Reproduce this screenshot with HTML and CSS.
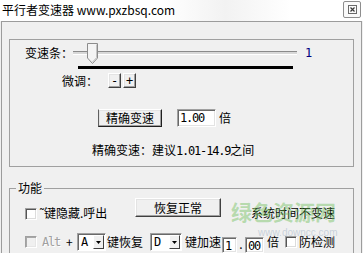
FILE: index.html
```html
<!DOCTYPE html>
<html lang="zh-CN">
<head>
    <meta charset="UTF-8">
    <title>平行者变速器</title>
    <link rel="stylesheet" href="styles.css">
</head>
<body>

    <div class="titlebar">
        <span class="title">平行者变速器 www.pxzbsq.com</span>
        <span class="close">
            <svg width="9" height="9" viewBox="0 0 9 9">
                <rect x="0.5" y="0.5" width="8" height="8" fill="none" stroke="#6a6a6a"/>
                <path d="M2.5 2.5L6.5 6.5M6.5 2.5L2.5 6.5" stroke="#3a3a3a" stroke-width="1.2"/>
            </svg>
        </span>
    </div>

    <div class="window">
        <div class="group speed">
            <div class="slider-row">
                <span class="label-slider">变速条：</span>
                <div class="track">
                    <div class="groove"></div>
                    <svg class="thumb" width="11" height="21" viewBox="0 0 11 21">
                        <polygon points="0.5,0.5 10.5,0.5 10.5,15 5.5,20.5 0.5,15" fill="#f4f4f4" stroke="#8c8c8c"/>
                        <polyline points="9.5,1.5 9.5,14.6 5.5,19" fill="none" stroke="#c4c4c4"/>
                    </svg>
                </div>
                <span class="slider-value">1</span>
            </div>
            <div class="speed-bar"></div>
            <div class="fine-row">
                <span class="label-fine">微调：</span>
                <button class="btn btn-small">-</button>
                <button class="btn btn-small">+</button>
            </div>
            <div class="precise-row">
                <button class="btn btn-precise">精确变速</button>
                <span class="edit edit-rate">1.00</span>
                <span class="unit">倍</span>
            </div>
            <div class="hint">精确变速：建议<span class="mono">1.01-14.9</span>之间</div>
        </div>

        <fieldset class="group func">
            <legend>功能</legend>
            <div class="func-row row-a">
                <span class="checkbox cb-hide"></span>
                <span class="hide-text">˜键隐藏.呼出</span>
                <button class="btn btn-reset">恢复正常</button>
                <span class="sys-text">系统时间不变速</span>
            </div>
            <div class="func-row row-b">
                <span class="checkbox checkbox-off cb-alt"></span>
                <span class="mono disabled alt">Alt</span>
                <span class="plus">+</span>
                <span class="combo combo-a"><span class="combo-val">A</span><span class="combo-arrow"><svg width="5" height="3" viewBox="0 0 5 3"><polygon points="0,0 5,0 2.5,3" fill="#000"/></svg></span></span>
                <span class="key-restore">键恢复</span>
                <span class="combo combo-d"><span class="combo-val">D</span><span class="combo-arrow"><svg width="5" height="3" viewBox="0 0 5 3"><polygon points="0,0 5,0 2.5,3" fill="#000"/></svg></span></span>
                <span class="key-speed">键加速</span>
                <span class="edit edit-int">1</span>
                <span class="dot">.</span>
                <span class="edit edit-dec">00</span>
                <span class="unit">倍</span>
                <span class="checkbox cb-detect"></span>
                <span class="detect-text">防检测</span>
            </div>
        </fieldset>
    </div>

    <div class="watermark">绿色资源网<span class="watermark-url">www.downcc.com</span></div>

</body>
</html>
```

FILE: styles.css
```css
body {
    margin: 0;
    width: 363px;
    height: 253px;
    overflow: hidden;
    position: relative;
    background-color: #f0f0f0;
    font-family: "Noto Sans CJK SC", "Liberation Sans", sans-serif;
    font-size: 12px;
    line-height: 14px;
    color: #000;
}

.mono {
    font-family: "DejaVu Sans Mono", "Liberation Mono", monospace;
    letter-spacing: -1.2px;
}

/* title bar */
.titlebar {
    height: 21px;
    display: flex;
    justify-content: space-between;
    align-items: flex-start;
    background: linear-gradient(to right, #ffffff 0%, #ffffff 45%, #f2f2f2 62%, #ffffff 80%);
}

.title {
    padding: 3px 0 0 2px;
    line-height: 13px;
}

.close {
    width: 18px;
    height: 17px;
    box-sizing: border-box;
    margin: 1px 2px 0 0;
    border: 1px solid #8e8e8e;
    border-radius: 2px;
    background-color: #fafafa;
    display: flex;
    align-items: center;
    justify-content: center;
}

/* window frame */
.window {
    margin: 0 1px;
    height: 232px;
    box-sizing: border-box;
    border: 1px solid #9c9c9c;
    border-bottom: none;
    padding: 17px 7px 0 7px;
}

.group {
    border: 1px solid #a0a0a0;
    box-sizing: border-box;
}

.speed {
    height: 128px;
}

.slider-row {
    display: flex;
    align-items: center;
    height: 22px;
    margin-top: 2px;
    padding-left: 15px;
}

.label-slider {
    width: 48px;
}

.track {
    position: relative;
    width: 224px;
    height: 22px;
    display: flex;
    align-items: center;
}

.groove {
    width: 100%;
    height: 4px;
    box-sizing: border-box;
    border-top: 1px solid #8a8a8a;
    border-bottom: 1px solid #ffffff;
    background-color: #d8d8d8;
}

.thumb {
    position: absolute;
    left: 14px;
    top: 1px;
}

.slider-value {
    margin-left: 8px;
    color: #000080;
    font-family: "DejaVu Sans Mono", "Liberation Mono", monospace;
}

.speed-bar {
    width: 215px;
    height: 3px;
    margin: 2px 0 0 68px;
    background-color: #000;
}

.fine-row {
    display: flex;
    align-items: center;
    height: 15px;
    margin-top: 4px;
    padding-left: 52px;
}

.label-fine {
    width: 46px;
}

/* classic 3d buttons */
.btn {
    box-sizing: border-box;
    padding: 0;
    font-family: inherit;
    font-size: 12px;
    line-height: 14px;
    color: #000;
    background-color: #f0f0f0;
    border: 1px solid;
    border-color: #ffffff #404040 #404040 #ffffff;
    box-shadow: inset -1px -1px #a0a0a0, inset 1px 1px #e3e3e3;
    border-radius: 0;
}

.btn-small {
    width: 13px;
    height: 15px;
    margin-right: 2px;
    font-family: "DejaVu Sans Mono", monospace;
}

.precise-row {
    display: flex;
    align-items: center;
    height: 18px;
    margin-top: 21px;
    padding-left: 88px;
}

.btn-precise {
    width: 64px;
    height: 18px;
    border-color: #ffffff #202020 #202020 #606060;
}

.edit {
    box-sizing: border-box;
    height: 18px;
    background-color: #fff;
    border: 1px solid;
    border-color: #a0a0a0 #ffffff #ffffff #a0a0a0;
    box-shadow: inset 1px 1px #696969, inset -1px -1px #e3e3e3;
    font-family: "DejaVu Sans Mono", "Liberation Mono", monospace;
    letter-spacing: -1.2px;
    line-height: 16px;
    padding-left: 2px;
}

.edit-rate {
    width: 39px;
    margin-left: 15px;
}

.unit {
    margin-left: 3px;
}

.hint {
    margin-top: 16px;
    padding-left: 82px;
}

/* function group, cut off by the window's bottom edge */
.func {
    margin: 14px 0 0 0;
    padding: 0;
    height: 72px;
    min-width: 0;
    border-bottom: none;
}

.func legend {
    margin-left: 6px;
    padding: 0 2px;
    line-height: 14px;
}

.func-row {
    display: flex;
}

.row-a {
    align-items: flex-start;
    height: 22px;
    margin-top: 3px;
}

.checkbox {
    width: 12px;
    height: 12px;
    box-sizing: border-box;
    background-color: #fff;
    border: 1px solid;
    border-color: #a0a0a0 #ffffff #ffffff #a0a0a0;
    box-shadow: inset 1px 1px #555555, inset -1px -1px #dcdcdc;
}

.checkbox-off {
    background-color: #f0f0f0;
    box-shadow: inset 1px 1px #a8a8a8, inset -1px -1px #e6e6e6;
}

.cb-hide {
    margin: 10px 0 0 15px;
}

.hide-text {
    width: 95px;
    margin: 8px 0 0 3px;
}

.btn-reset {
    width: 86px;
    height: 19px;
}

.sys-text {
    margin: 8px 0 0 30px;
}

.row-b {
    align-items: center;
    height: 18px;
    margin-top: 13px;
}

.cb-alt {
    margin-left: 15px;
}

.disabled {
    color: #a0a0a0;
    text-shadow: 1px 1px #ffffff;
}

.alt {
    margin-left: 5px;
    width: 19px;
}

.plus {
    width: 11px;
    margin-left: 5px;
}

.combo {
    display: flex;
    height: 18px;
    box-sizing: border-box;
    padding: 1px;
    background-color: #fff;
    border: 1px solid;
    border-color: #a0a0a0 #ffffff #ffffff #a0a0a0;
    box-shadow: inset 1px 1px #696969;
}

.combo-val {
    flex: 1;
    padding-left: 2px;
    font-family: "DejaVu Sans Mono", "Liberation Mono", monospace;
    line-height: 14px;
}

.combo-arrow {
    width: 11px;
    box-sizing: border-box;
    background-color: #f0f0f0;
    border: 1px solid;
    border-color: #ffffff #404040 #404040 #ffffff;
    display: flex;
    align-items: center;
    justify-content: center;
}

.combo-a {
    width: 29px;
}

.key-restore {
    margin: 0 7px 0 1px;
}

.combo-d {
    width: 32px;
}

.key-speed {
    margin-left: 3px;
}

.edit-int,
.edit-dec {
    align-self: flex-start;
    margin-top: 4px;
    height: 16px;
}

.edit-int {
    width: 15px;
    margin-left: 1px;
}

.dot {
    width: 8px;
    text-align: center;
    align-self: flex-end;
}

.edit-dec {
    width: 19px;
}

.cb-detect {
    margin-left: 6px;
}

.detect-text {
    margin-left: 2px;
}

/* site watermark baked into the screenshot */
.watermark {
    position: absolute;
    left: 231px;
    top: 199px;
    font-size: 21px;
    line-height: 24px;
    font-weight: bold;
    color: rgba(110, 190, 90, 0.45);
    pointer-events: none;
}

.watermark-url {
    display: block;
    margin: 5px 0 0 27px;
    font-family: "Liberation Sans", sans-serif;
    font-size: 10px;
    line-height: 10px;
    font-weight: normal;
    color: rgba(150, 170, 190, 0.45);
}
```
